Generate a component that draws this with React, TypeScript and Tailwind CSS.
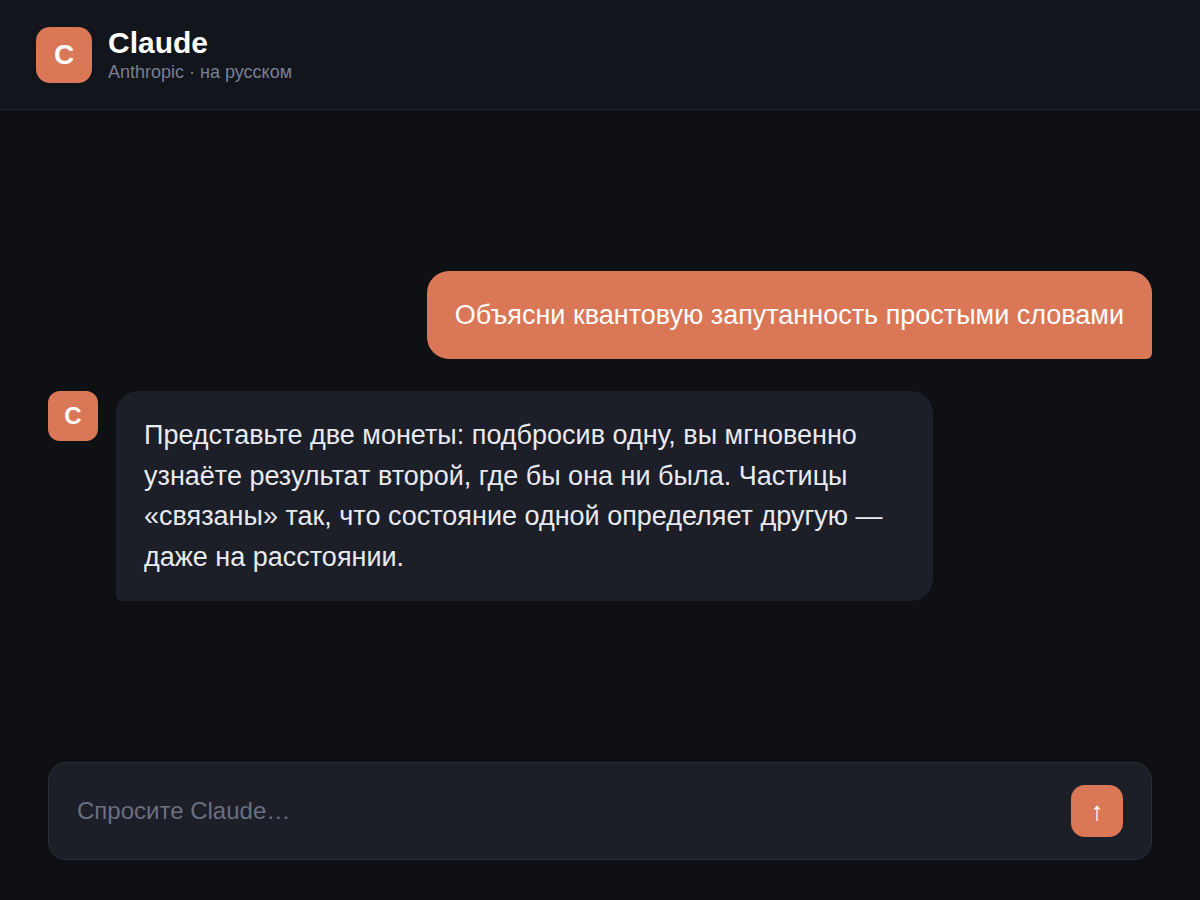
import { useState } from "react";
import type { FormEvent } from "react";
import clsx from "clsx";

interface Message {
  id: number;
  role: "user" | "assistant";
  text: string;
}

const INITIAL_MESSAGES: Message[] = [
  { id: 1, role: "user", text: "Объясни квантовую запутанность простыми словами" },
  {
    id: 2,
    role: "assistant",
    text: "Представьте две монеты: подбросив одну, вы мгновенно узнаёте результат второй, где бы она ни была. Частицы «связаны» так, что состояние одной определяет другую — даже на расстоянии.",
  },
];

const Logo = ({ className }: { className: string }) => (
  <div className={clsx("flex shrink-0 items-center justify-center bg-[#d97757] font-bold text-white", className)}>C</div>
);

const MessageRow = ({ message }: { message: Message }) => {
  if (message.role === "user") {
    return (
      <div className="flex justify-end">
        <p className="max-w-[74%] rounded-[22px] rounded-br-md bg-[#d97757] px-7 py-6 text-[27px] leading-normal text-white">
          {message.text}
        </p>
      </div>
    );
  }

  return (
    <div className="flex items-start gap-[18px]">
      <Logo className="size-[50px] rounded-xl text-2xl" />
      <p className="max-w-[74%] rounded-[22px] rounded-bl-md bg-[#1c1e28] px-7 py-6 text-[27px] leading-normal text-[#e8eaf0]">
        {message.text}
      </p>
    </div>
  );
};

export default function App() {
  const [messages, setMessages] = useState(INITIAL_MESSAGES);
  const [draft, setDraft] = useState("");

  const handleSubmit = (event: FormEvent) => {
    event.preventDefault();
    if (!draft.trim()) {
      return;
    }

    setMessages([...messages, { id: messages.length + 1, role: "user", text: draft.trim() }]);
    setDraft("");
  };

  return (
    <div className="flex min-h-screen flex-col bg-[#0f1014] font-['Liberation_Sans',Arial,sans-serif]">
      <header className="flex items-center gap-4 border-b border-[#1e212b] bg-[#12151c] px-9 py-[26px]">
        <Logo className="size-14 rounded-[14px] text-[28px]" />
        <div className="flex flex-col gap-0.5">
          <h1 className="text-3xl leading-[34px] font-bold text-white">Claude</h1>
          <p className="text-lg leading-[21px] text-[#7a7f92]">Anthropic · на русском</p>
        </div>
      </header>

      <main className="flex flex-1 flex-col justify-center gap-8 px-12">
        {messages.map((message) => (
          <MessageRow key={message.id} message={message} />
        ))}
      </main>

      <form
        onSubmit={handleSubmit}
        className="mx-12 mb-10 flex items-center gap-4 rounded-[18px] border border-[#2b2d38] bg-[#1c1e28] px-7 py-[22px]"
      >
        <input
          value={draft}
          onChange={(event) => setDraft(event.target.value)}
          placeholder="Спросите Claude…"
          aria-label="Сообщение"
          className="min-w-0 flex-1 bg-transparent text-2xl text-[#e8eaf0] outline-none placeholder:text-[#6b6f80]"
        />
        <button
          type="submit"
          aria-label="Отправить"
          className="flex size-[52px] shrink-0 items-center justify-center rounded-[14px] bg-[#d97757] text-[26px] text-white"
        >
          ↑
        </button>
      </form>
    </div>
  );
}
